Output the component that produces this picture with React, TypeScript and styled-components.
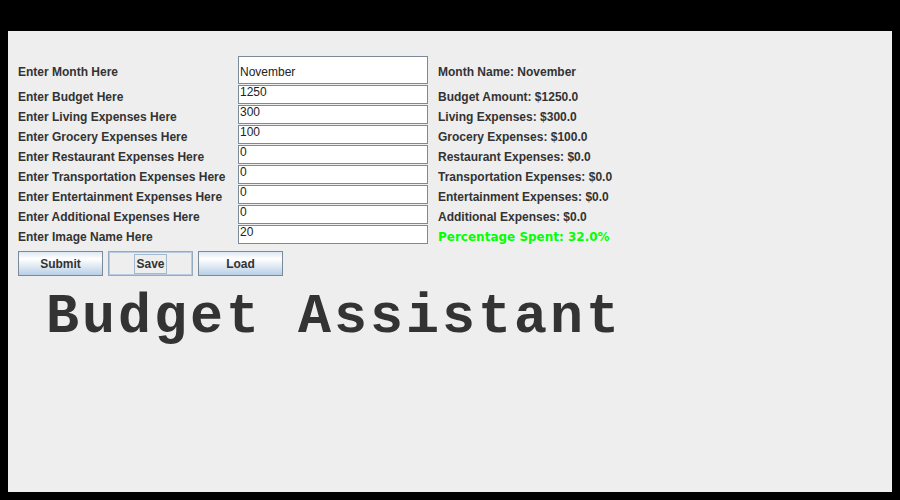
import React from 'react'
import styled, { createGlobalStyle } from 'styled-components'

const GlobalStyle = createGlobalStyle`
    html, body {
        margin: 0;
        padding: 0;
        background: #000;
    }
`

const Screen = styled.div`
    box-sizing: border-box;
    width: 900px;
    height: 500px;
    padding: 31px 8px 8px;
    background: #000;
`

const Frame = styled.div`
    box-sizing: border-box;
    height: 100%;
    background: #eeeeee;
    padding: 25px 10px 0;
    font-family: 'Liberation Sans', Arial, sans-serif;
`

const Form = styled.div`
    display: grid;
    grid-template-columns: 210px 190px auto;
    grid-template-rows: 28px repeat(8, 19px);
    row-gap: 1px;
    column-gap: 10px;
`

const Label = styled.div<{ tall?: boolean }>`
    font-size: 12px;
    font-weight: bold;
    color: #333;
    white-space: nowrap;
    padding-top: ${(props) => (props.tall ? '2px' : '4px')};
    line-height: ${(props) => (props.tall ? '28px' : '17px')};
`

const Result = styled(Label)<{ highlight?: boolean }>`
    ${(props) =>
        props.highlight &&
        `
        font-family: 'DejaVu Sans', Verdana, sans-serif;
        color: #00ff00;
    `}
`

const Field = styled.input<{ tall?: boolean }>`
    box-sizing: border-box;
    width: 190px;
    height: ${(props) => (props.tall ? '28px' : '19px')};
    margin: 0;
    border: 1px solid #7a8a99;
    border-radius: 0;
    background: #fff;
    outline: none;
    font-family: 'Liberation Sans', Arial, sans-serif;
    font-size: 12px;
    color: #222;
    padding: ${(props) => (props.tall ? '4px 1px 0' : '0 1px 5px')};
`

const ButtonRow = styled.div`
    display: flex;
    gap: 5px;
    margin-top: 7px;
`

const Button = styled.button<{ focused?: boolean }>`
    box-sizing: border-box;
    width: 85px;
    height: 25px;
    margin: 0;
    padding: 0;
    border: 1px solid ${(props) => (props.focused ? '#94abc4' : '#7a8a99')};
    border-radius: 0;
    background: ${(props) =>
        props.focused
            ? '#eeeeee'
            : 'linear-gradient(#dde8f3 0%, #ffffff 30%, #b8cfe5 100%)'};
    box-shadow: ${(props) => (props.focused ? 'inset 0 0 0 1px #b8cbe0' : 'none')};
    font-family: 'Liberation Sans', Arial, sans-serif;
    font-size: 12px;
    font-weight: bold;
    color: #333;
    display: flex;
    align-items: center;
    justify-content: center;
`

const FocusRing = styled.span`
    border: 1px solid #a3b8cc;
    padding: 2px 1px;
    line-height: 14px;
`

const Title = styled.div`
    margin: 14px 0 0 28px;
    font-family: 'Liberation Mono', 'Courier New', monospace;
    font-size: 55px;
    letter-spacing: 3px;
    font-weight: bold;
    line-height: 55px;
    color: #333;
    white-space: pre;
`

const rows = [
    { label: 'Enter Budget Here', value: '1250', result: 'Budget Amount: $1250.0' },
    { label: 'Enter Living Expenses Here', value: '300', result: 'Living Expenses: $300.0' },
    { label: 'Enter Grocery Expenses Here', value: '100', result: 'Grocery Expenses: $100.0' },
    { label: 'Enter Restaurant Expenses Here', value: '0', result: 'Restaurant Expenses: $0.0' },
    { label: 'Enter Transportation Expenses Here', value: '0', result: 'Transportation Expenses: $0.0' },
    { label: 'Enter Entertainment Expenses Here', value: '0', result: 'Entertainment Expenses: $0.0' },
    { label: 'Enter Additional Expenses Here', value: '0', result: 'Additional Expenses: $0.0' },
]

export default function App() {
    return (
        <Screen>
            <GlobalStyle />
            <Frame>
                <Form>
                    <Label tall>Enter Month Here</Label>
                    <Field tall readOnly value="November" />
                    <Result tall>Month Name: November</Result>
                    {rows.map((row) => (
                        <React.Fragment key={row.label}>
                            <Label>{row.label}</Label>
                            <Field readOnly value={row.value} />
                            <Result>{row.result}</Result>
                        </React.Fragment>
                    ))}
                    <Label>Enter Image Name Here</Label>
                    <Field readOnly value="20" />
                    <Result highlight>Percentage Spent: 32.0%</Result>
                </Form>
                <ButtonRow>
                    <Button>Submit</Button>
                    <Button focused>
                        <FocusRing>Save</FocusRing>
                    </Button>
                    <Button>Load</Button>
                </ButtonRow>
                <Title>Budget Assistant</Title>
            </Frame>
        </Screen>
    )
}
